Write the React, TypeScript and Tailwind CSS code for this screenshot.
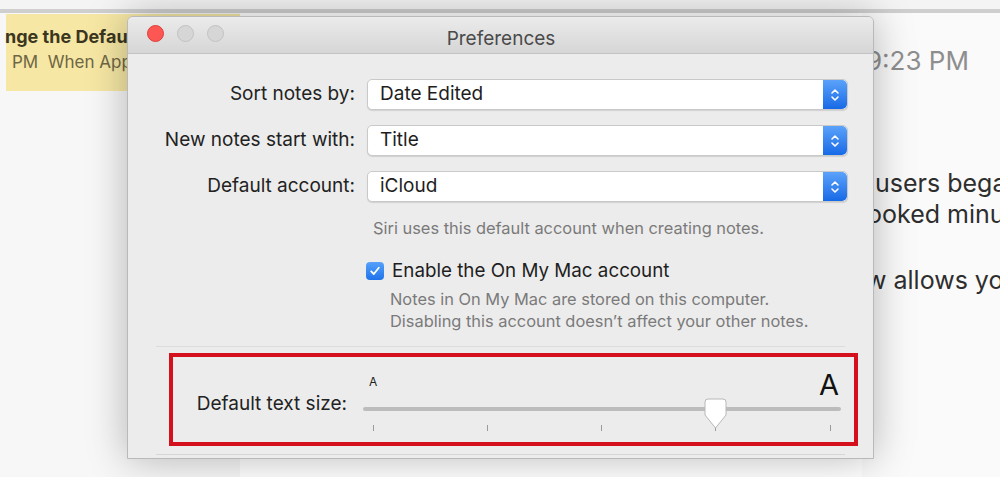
import React from "react";

const Stepper = () => (
  <div className="w-[24px] h-full rounded-r-[5px] bg-gradient-to-b from-[#5aa2fa] to-[#1669e6] flex items-center justify-center">
    <svg width="10" height="16" viewBox="0 0 10 16" fill="none">
      <path d="M2 6 L5 3 L8 6" stroke="white" strokeWidth="1.6" strokeLinecap="round" strokeLinejoin="round" />
      <path d="M2 10 L5 13 L8 10" stroke="white" strokeWidth="1.6" strokeLinecap="round" strokeLinejoin="round" />
    </svg>
  </div>
);

const Select = ({ value }: { value: string }) => (
  <div className="h-[31px] w-[481px] flex items-stretch rounded-[5px] bg-white border border-[#c9c9c9] shadow-[0_1px_1px_rgba(0,0,0,0.12)]">
    <div className="flex-1 flex items-center pl-[12px] text-[19px] text-[#1e1e1e]">{value}</div>
    <Stepper />
  </div>
);

export default function App() {
  const ticks = [10, 124, 238, 352, 467];
  return (
    <div
      className="relative w-[1000px] h-[477px] overflow-hidden bg-white"
      style={{ fontFamily: "Inter, 'Noto Sans', 'Liberation Sans', sans-serif" }}
    >
      {/* background notes app */}
      <div className="flex flex-col w-full h-full">
        <div className="h-[9px] bg-[#f4f4f4]" />
        <div className="h-[4px] bg-[#cfcfcf]" />
        <div className="flex flex-1">
          {/* left pane */}
          <div className="w-[240px] flex flex-col bg-[#f7f7f7]">
            <div className="mt-[1px] ml-[6px] h-[77px] bg-[#f6e7a4] flex flex-col pt-[11px]">
              <div className="text-[18px] font-bold text-[#3b3620] leading-[24px] whitespace-nowrap -ml-[1px]">nge the Default Font Size</div>
              <div className="text-[17px] text-[#6e6644] leading-[24px] whitespace-nowrap mt-[1px] pl-[6px]">PM&nbsp;&nbsp;When Apple released</div>
            </div>
          </div>
          <div className="flex-1" />
          {/* right pane */}
          <div className="w-[138px] flex flex-col bg-[#fafafa] whitespace-nowrap overflow-hidden">
            <div className="text-[26px] text-[#8e8e8e] leading-[30px] mt-[33px] pl-[4px]">9:23 PM</div>
            <div className="text-[25px] text-[#2e2e2e] leading-[31px] mt-[92px] pl-[13px]">users began</div>
            <div className="text-[25px] text-[#2e2e2e] leading-[31px] pl-[5px]">ooked minutes</div>
            <div className="text-[25px] text-[#2e2e2e] leading-[31px] mt-[35px] pl-[4px]">w allows you</div>
          </div>
        </div>
      </div>

      {/* Preferences window */}
      <div className="absolute left-[127px] top-[16px] w-[747px] h-[443px] bg-[#ececec] rounded-t-[6px] border border-[#b9b9b9] shadow-[0_0_40px_rgba(0,0,0,0.28)] flex flex-col overflow-hidden">
        {/* title bar */}
        <div className="h-[37px] shrink-0 relative flex items-start bg-gradient-to-b from-[#ebebeb] to-[#d6d6d6] border-b border-[#c2c2c2]">
          <div className="flex items-center gap-[13px] pl-[19px] pt-[8px]">
            <div className="w-[17px] h-[17px] rounded-full bg-[#fc5753] border border-[#df3f3a]" />
            <div className="w-[17px] h-[17px] rounded-full bg-[#d6d6d6] border border-[#c2c2c2]" />
            <div className="w-[17px] h-[17px] rounded-full bg-[#d6d6d6] border border-[#c2c2c2]" />
          </div>
          <div className="flex-1 text-center text-[19px] leading-[24px] pt-[10px] text-[#4a4a4a] pr-[95px]">Preferences</div>
        </div>

        {/* body */}
        <div className="flex flex-col pt-[25px]">
          <div className="grid grid-cols-[227px_481px] gap-x-[12px] gap-y-[15px] items-center">
            <div className="text-right text-[19px] text-[#222]">Sort notes by:</div>
            <Select value="Date Edited" />
            <div className="text-right text-[19px] text-[#222] whitespace-nowrap">New notes start with:</div>
            <Select value="Title" />
            <div className="text-right text-[19px] text-[#222]">Default account:</div>
            <Select value="iCloud" />
          </div>

          <div className="ml-[245px] mt-[16px] text-[16.4px] leading-[20px] text-[#7a7a7a] whitespace-nowrap">
            Siri uses this default account when creating notes.
          </div>

          <div className="ml-[238px] mt-[22px] flex items-center gap-[8px] h-[22px]">
            <div className="w-[18px] h-[18px] rounded-[4px] bg-gradient-to-b from-[#55a1fa] to-[#1e72ea] flex items-center justify-center">
              <svg width="12" height="12" viewBox="0 0 12 12" fill="none">
                <path d="M2.2 6.4 L4.8 9 L9.8 2.8" stroke="white" strokeWidth="1.8" strokeLinecap="round" strokeLinejoin="round" />
              </svg>
            </div>
            <div className="text-[18.8px] text-[#1e1e1e] whitespace-nowrap">Enable the On My Mac account</div>
          </div>

          <div className="ml-[262px] mt-[6px] text-[16.4px] leading-[22px] text-[#7a7a7a] whitespace-nowrap">
            <div>Notes in On My Mac are stored on this computer.</div>
            <div>Disabling this account doesn’t affect your other notes.</div>
          </div>

          <div className="mt-[14px] mx-[28px] h-[1px] bg-[#dcdcdc]" />

          {/* highlighted text-size section */}
          <div className="mt-[6px] ml-[41px] w-[689px] h-[93px] border-4 border-[#d4101c] flex items-start">
            <div className="ml-[20px] mt-[36px] w-[154px] text-right text-[19px] leading-[22px] text-[#222] whitespace-nowrap">
              Default text size:
            </div>
            <div className="ml-[16px] mt-[16px] relative w-[478px] h-[64px]">
              <div className="absolute left-[6px] top-[2px] text-[12px] leading-[14px] text-[#222]">A</div>
              <div className="absolute right-[2px] -top-[4px] text-[29px] leading-[32px] text-[#111]">A</div>
              <div className="absolute left-0 right-0 top-[34px] h-[4px] rounded-full bg-[#bcbcbc]" />
              {ticks.map((x) => (
                <div key={x} className="absolute top-[52px] w-[1px] h-[6px] bg-[#9a9a9a]" style={{ left: x }} />
              ))}
              <svg className="absolute left-[341px] top-[25px]" width="23" height="32" viewBox="0 0 23 32">
                <path
                  d="M4 1 H19 A3 3 0 0 1 22 4 V17 L11.5 30 L1 17 V4 A3 3 0 0 1 4 1 Z"
                  fill="white"
                  stroke="#b8b8b8"
                  strokeWidth="1"
                />
              </svg>
            </div>
          </div>

          <div className="mt-[8px] mx-[28px] h-[1px] bg-[#d6d6d6]" />
        </div>
      </div>
    </div>
  );
}
